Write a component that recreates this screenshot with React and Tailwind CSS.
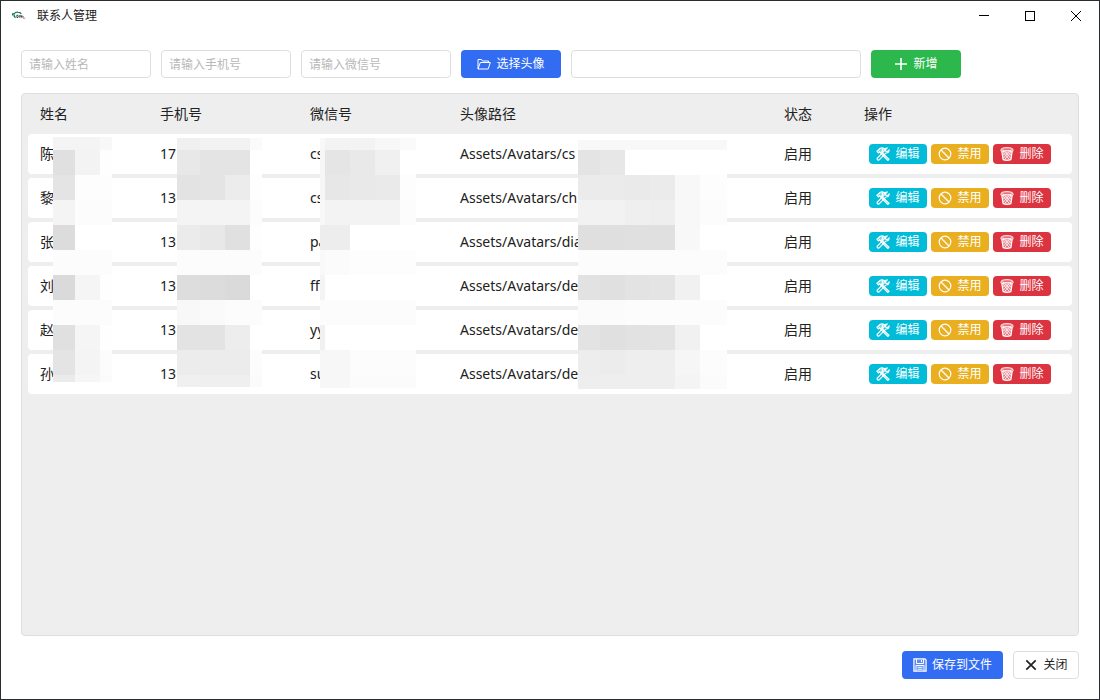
import React, { useState } from "react";

const initialContacts = [
  { id: 1, name: "陈", phone: "17", wechat: "cs", avatar: "Assets/Avatars/cs", enabled: true },
  { id: 2, name: "黎", phone: "13", wechat: "cs", avatar: "Assets/Avatars/ch", enabled: true },
  { id: 3, name: "张", phone: "13", wechat: "pa", avatar: "Assets/Avatars/dia", enabled: true },
  { id: 4, name: "刘", phone: "13", wechat: "ff", avatar: "Assets/Avatars/de", enabled: true },
  { id: 5, name: "赵", phone: "13", wechat: "yy", avatar: "Assets/Avatars/de", enabled: true },
  { id: 6, name: "孙", phone: "13", wechat: "su", avatar: "Assets/Avatars/de", enabled: true },
];

// Grey level of every tile, one string per tile row
const nameTiles = [
  "f4 f4 f8",
  "e0 f3 fe",
  "e4 fd fd",
  "f4 fc fc",
  "dc ff ff",
  "fc fc fc",
  "da f5 fe",
  "fc fc fc",
  "e0 f5 fe",
  "e4 f4 fc",
  "eb f6 fb",
];

const phoneTiles = [
  "f0 f2 f2 fa",
  "e8 e4 e4 ff",
  "e3 e4 ec fe",
  "f4 f4 f4 fc",
  "eb e8 e0 fe",
  "fc fc fc fc",
  "dd dc da ff",
  "f8 fa fc fc",
  "e3 e3 ed ff",
  "ec ec ec fc",
  "f0 ef ef fb",
];

const wechatTiles = [
  "f8 f3 f3 f7 fa",
  "f6 e5 e9 f0 ff",
  "f6 e7 e9 ea fd",
  "f8 f3 f3 f3 fc",
  "ed ed ff ff ff",
  "f9 fb fd fd fd",
  "f4 ff ff ff ff",
  "fc fc fc fc fc",
  "f1 ff ff ff ff",
  "f7 f7 fc fc fc",
  "f7 f7 fb fb fb",
];

const avatarTiles = [
  "f8 f8 f8 f8 f8 f8",
  "e4 e7 ff ff ff ff",
  "eb eb ea eb f8 fd",
  "f2 f2 ef ee f8 fc",
  "df df e0 e0 f8 ff",
  "fc fc fc fc fc fc",
  "e2 e0 e3 e4 f1 ff",
  "fb fb fc fc fc fc",
  "e3 e0 e2 e3 f1 ff",
  "ed ec ee ee f6 fc",
  "ee ee ee ee f4 fb",
];

const Mosaic = ({ tiles, className }) => (
  <div aria-hidden="true" className={`absolute grid pointer-events-none ${className}`}>
    {tiles
      .join(" ")
      .split(" ")
      .map((tone, i) => (
        <span key={i} style={{ backgroundColor: `#${tone}${tone}${tone}` }} />
      ))}
  </div>
);

const Icon = ({ children }) => (
  <svg
    viewBox="0 0 14 14"
    className="w-3.5 h-3.5 shrink-0"
    fill="none"
    stroke="currentColor"
    aria-hidden="true"
  >
    {children}
  </svg>
);

const FolderIcon = () => (
  <Icon>
    <path d="M1 12V2.5h3.5l1 1.5h6v1.5M1 12 3.3 5.5h10L11.2 12z" strokeLinejoin="round" />
  </Icon>
);

const PlusIcon = () => (
  <Icon>
    <path d="M7 1v12M1 7h12" strokeWidth="1.6" />
  </Icon>
);

const ToolsIcon = () => (
  <Icon>
    <g strokeWidth="1.2">
      <path d="M1 4.3 4.2 1.2Q6.3.3 8 1.5L6.1 2.8l.8 1-2.3 2.1-1-1L2.4 5.9z" fill="currentColor" fillOpacity="0.4" />
      <path d="m5.6 5.3 7.4 7-1.2 1.2-7.2-7.3" />
      <path d="M13 3.1 11.3 4.6 9.8 4.2 9.4 2.8 11 1.1Q8.5.8 8.1 3.2v1L1.3 11.1q-.5 1.2.5 1.8 1 .5 1.6-.3L9.8 6Q13.1 6.2 13 3.1z" />
    </g>
  </Icon>
);

const BanIcon = () => (
  <Icon>
    <circle cx="7" cy="7" r="5.8" strokeWidth="1.2" />
    <path d="m3 3 8 8" strokeWidth="1.2" />
  </Icon>
);

const TrashIcon = () => (
  <Icon>
    <ellipse cx="7" cy="2.2" rx="5.8" ry="1.5" fill="currentColor" fillOpacity="0.3" />
    <path d="M1 2.6v1.6q6 1.8 12 0V2.6" />
    <path
      d="M1.9 4.8 3.1 12.6q3.9 1.4 7.8 0L12.1 4.8"
      strokeWidth="1.2"
      fill="currentColor"
      fillOpacity="0.35"
    />
    <path
      d="m3 5.2 6.6 7.6M5.5 5.5l5.5 5.8M8.2 5.5l3.2 3.2M11 5.2l-6.6 7.6M8.5 5.5 3 11.3M5.8 5.5 2.6 8.7"
      strokeWidth="0.8"
    />
  </Icon>
);

const SaveIcon = () => (
  <Icon>
    <path d="M.9.9h11L13.1 2v11.1H.9z" fill="currentColor" fillOpacity="0.2" strokeWidth="1.2" />
    <path d="M3.5 1v4.5h7V1M8.5 2v2.2M3 13V7.5h8V13M4.5 9.3h5M4.5 11.2h5" />
  </Icon>
);

const CloseIcon = () => (
  <Icon>
    <path d="m2.3 2.3 9.4 9.4M11.7 2.3l-9.4 9.4" strokeWidth="1.7" />
  </Icon>
);

const Logo = () => (
  <svg viewBox="0 0 14 10" className="w-3.5 h-2.5" fill="none" aria-hidden="true">
    <path d="M.5 4.4V2.8H2Q4 .9 6 1.2q2.4 0 3.2 1.9" stroke="#16794f" strokeWidth="1.2" />
    <path d="M2 3.4q-.2 2.4 1.6 3.2" stroke="#16794f" strokeWidth="1.4" />
    <path d="M4.9 4v2.6q1.6.3 1.5-1.2T4.9 4M7.8 4v2.8M9.4 4.7v2M11 5v1.8M7.8 5h2.8" stroke="#33413c" strokeWidth="0.9" />
    <path d="M10.8 7.2h2.4" stroke="#e0776f" />
  </svg>
);

const TextField = ({ label, placeholder, value, onChange, className }) => (
  <input
    type="text"
    aria-label={label}
    placeholder={placeholder}
    value={value}
    onChange={onChange}
    className={`h-7 px-[7px] text-xs bg-white border border-[#dedede] rounded placeholder:text-[#b8b8b8] outline-none focus:border-[#326cf3] ${className}`}
  />
);

const ActionButton = ({ children, onClick, className }) => (
  <button
    type="button"
    onClick={onClick}
    className={`flex items-center justify-center gap-[5px] rounded text-xs hover:opacity-90 ${className}`}
  >
    {children}
  </button>
);

const App = () => {
  const [contacts, setContacts] = useState(initialContacts);
  const [form, setForm] = useState({ name: "", phone: "", wechat: "", avatar: "" });

  const setField = (key) => (e) => setForm({ ...form, [key]: e.target.value });

  const addContact = () => {
    if (!form.name) return;
    setContacts([...contacts, { ...form, id: Date.now(), enabled: true }]);
    setForm({ name: "", phone: "", wechat: "", avatar: "" });
  };

  const editContact = (contact) => {
    const { name, phone, wechat, avatar } = contact;
    setForm({ name, phone, wechat, avatar });
  };

  const toggleContact = (id) =>
    setContacts(contacts.map((c) => (c.id === id ? { ...c, enabled: !c.enabled } : c)));

  const deleteContact = (id) => setContacts(contacts.filter((c) => c.id !== id));

  return (
    <div className="min-h-screen flex flex-col bg-white border border-[#2a2d30] text-[#212121] font-['Noto_Sans','Noto_Sans_CJK_SC',sans-serif]">
      {/* Title bar */}
      <header className="h-[29px] flex items-center pl-[11px]">
        <Logo />
        <h1 className="ml-[11px] text-xs">联系人管理</h1>
        <div className="ml-auto flex h-full">
          <button type="button" aria-label="最小化" className="w-[46px] flex items-center justify-center hover:bg-gray-100">
            <span className="w-2.5 h-px bg-black" />
          </button>
          <button type="button" aria-label="最大化" className="w-[46px] flex items-center justify-center hover:bg-gray-100">
            <span className="w-2.5 h-2.5 border border-black" />
          </button>
          <button type="button" aria-label="关闭窗口" className="w-[46px] flex items-center justify-center hover:bg-gray-100">
            <svg viewBox="0 0 10 10" className="w-2.5 h-2.5" stroke="black" aria-hidden="true">
              <path d="m0 0 10 10M10 0 0 10" />
            </svg>
          </button>
        </div>
      </header>

      <main className="flex-1 flex flex-col gap-[15px] p-5">
        {/* New contact form */}
        <div className="flex gap-2.5">
          <TextField label="姓名" placeholder="请输入姓名" value={form.name} onChange={setField("name")} className="w-[130px]" />
          <TextField label="手机号" placeholder="请输入手机号" value={form.phone} onChange={setField("phone")} className="w-[130px]" />
          <TextField label="微信号" placeholder="请输入微信号" value={form.wechat} onChange={setField("wechat")} className="w-[150px]" />
          <ActionButton className="w-[100px] h-7 bg-[#326cf3] text-white">
            <FolderIcon />
            选择头像
          </ActionButton>
          <TextField label="头像路径" value={form.avatar} onChange={setField("avatar")} className="w-[290px]" />
          <ActionButton onClick={addContact} className="w-[90px] h-7 bg-[#2db84d] text-white">
            <PlusIcon />
            新增
          </ActionButton>
        </div>

        {/* Contact list */}
        <section className="relative flex-1 px-1.5 bg-[#eeeeee] border border-[#dedede] rounded">
          <table className="w-full table-fixed border-separate border-spacing-x-0 border-spacing-y-1 text-sm text-left">
            <thead>
              <tr className="h-8">
                <th className="w-[120px] px-3 font-normal">姓名</th>
                <th className="w-[150px] px-3 font-normal">手机号</th>
                <th className="w-[150px] px-3 font-normal">微信号</th>
                <th className="px-3 font-normal">头像路径</th>
                <th className="w-20 px-3 font-normal">状态</th>
                <th className="w-[220px] px-3 font-normal">操作</th>
              </tr>
            </thead>
            <tbody>
              {contacts.map((contact) => (
                <tr key={contact.id} className="h-10 bg-white">
                  <td className="px-3 rounded-l">{contact.name}</td>
                  <td className="px-3">{contact.phone}</td>
                  <td className="px-3">{contact.wechat}</td>
                  <td className="px-3">{contact.avatar}</td>
                  <td className="px-3">{contact.enabled ? "启用" : "禁用"}</td>
                  <td className="px-[17px] rounded-r">
                    <div className="flex gap-1 text-white">
                      <ActionButton onClick={() => editContact(contact)} className="w-[58px] h-5 bg-[#00bcd8]">
                        <ToolsIcon />
                        编辑
                      </ActionButton>
                      <ActionButton onClick={() => toggleContact(contact.id)} className="w-[58px] h-5 bg-[#e9af20]">
                        <BanIcon />
                        {contact.enabled ? "禁用" : "启用"}
                      </ActionButton>
                      <ActionButton onClick={() => deleteContact(contact.id)} className="w-[58px] h-5 bg-[#db3340]">
                        <TrashIcon />
                        删除
                      </ActionButton>
                    </div>
                  </td>
                </tr>
              ))}
            </tbody>
          </table>

          {/* Privacy mosaics over the personal data */}
          <Mosaic tiles={nameTiles} className="left-[31px] top-[43px] grid-cols-[22px_25px_12px] grid-rows-[13px_repeat(9,25px)_7px]" />
          <Mosaic tiles={phoneTiles} className="left-[155px] top-[44px] grid-cols-[23px_25px_25px_12px] grid-rows-[12px_repeat(9,25px)_12px]" />
          <Mosaic tiles={wechatTiles} className="left-[298px] top-[44px] grid-cols-[5px_25px_25px_25px_16px] grid-rows-[12px_repeat(9,25px)_13px]" />
          <Mosaic tiles={avatarTiles} className="left-[556px] top-[46px] grid-cols-[22px_25px_25px_25px_25px_27px] grid-rows-[10px_repeat(9,25px)_14px]" />
        </section>

        <footer className="flex justify-end gap-2.5">
          <ActionButton className="w-[101px] h-7 bg-[#326cf3] text-white">
            <SaveIcon />
            保存到文件
          </ActionButton>
          <ActionButton className="w-[66px] h-7 bg-white border border-[#dedede]">
            <CloseIcon />
            关闭
          </ActionButton>
        </footer>
      </main>
    </div>
  );
};

export default App;
